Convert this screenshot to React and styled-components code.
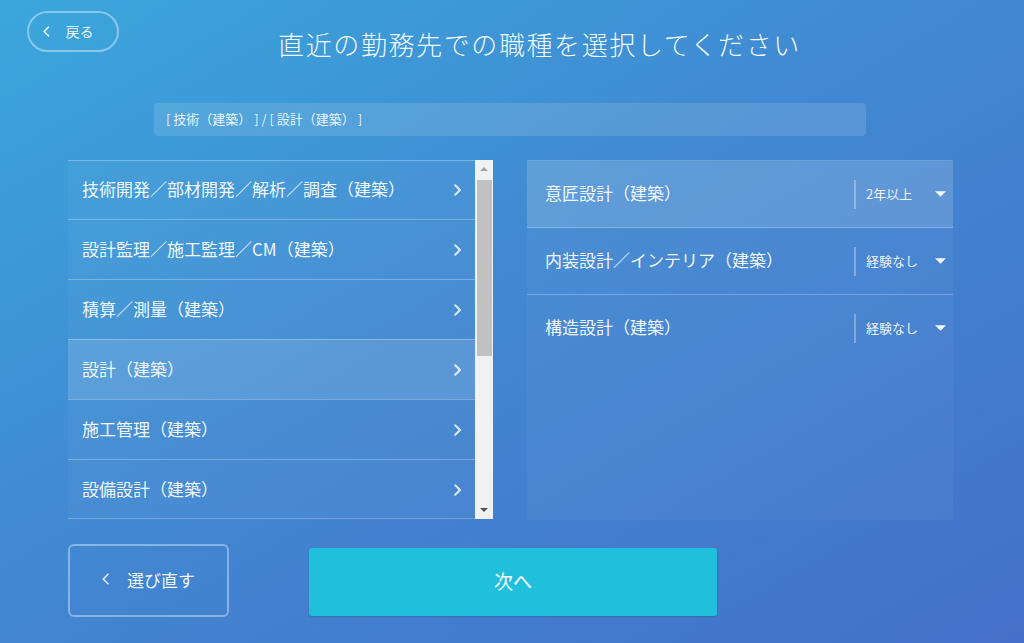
import styled, { createGlobalStyle } from 'styled-components'

const GlobalStyle = createGlobalStyle`
  html, body {
    margin: 0;
    padding: 0;
  }
  body {
    font-family: "Noto Sans CJK JP", "Noto Sans", sans-serif;
    color: #fff;
  }
`

const Page = styled.div`
  width: 1024px;
  height: 643px;
  overflow: hidden;
  background: linear-gradient(150deg, #3aa7dc 0%, #4189d2 45%, #4570c9 100%);
  display: flex;
  flex-direction: column;
`

const Header = styled.header`
  height: 86px;
  display: flex;
  align-items: center;
  padding: 0 64px 0 27px;
`

const BackButton = styled.button`
  align-self: flex-start;
  margin-top: 11px;
  width: 92px;
  height: 41px;
  box-sizing: border-box;
  border: 2px solid rgba(255, 255, 255, 0.4);
  border-radius: 21px;
  background: transparent;
  color: rgba(255, 255, 255, 0.92);
  font-family: inherit;
  font-size: 14px;
  display: flex;
  align-items: center;
  gap: 16px;
  padding: 0 0 1px 14px;
`

const Title = styled.h1`
  flex: 1;
  margin: 0;
  text-align: center;
  font-family: "Noto Sans CJK JP Light", "Noto Sans CJK JP", sans-serif;
  font-size: 26px;
  font-weight: 300;
  letter-spacing: 1.6px;
  color: rgba(255, 255, 255, 0.96);
`

const Breadcrumb = styled.div`
  margin: 17px 0 0 154px;
  width: 712px;
  height: 33px;
  box-sizing: border-box;
  border-radius: 4px;
  background: rgba(255, 255, 255, 0.12);
  display: flex;
  align-items: center;
  padding: 0 0 2px 12px;
  font-size: 13px;
  color: rgba(255, 255, 255, 0.9);
`

const Content = styled.div`
  margin-top: 24px;
  padding-left: 68px;
  display: flex;
  gap: 34px;
`

const LeftColumn = styled.div`
  display: flex;
  height: 359px;
`

const List = styled.div`
  width: 407px;
  overflow: hidden;
  border-bottom: 1px solid rgba(255, 255, 255, 0.28);
`

const ListRow = styled.div`
  height: 59px;
  box-sizing: border-box;
  border-top: 1px solid rgba(255, 255, 255, 0.28);
  background: ${p => (p.$active ? 'rgba(255, 255, 255, 0.14)' : 'rgba(255, 255, 255, 0.04)')};
  display: flex;
  align-items: center;
  justify-content: space-between;
  padding: 0 14px 3px 14px;
  font-size: 17px;
  color: rgba(255, 255, 255, 0.95);
  & + & {
    height: 60px;
  }
`

const ListChevron = styled.span`
  display: flex;
  padding-top: 3px;
`

const Scrollbar = styled.div`
  width: 18px;
  background: #f1f1f1;
  display: flex;
  flex-direction: column;
  align-items: center;
`

const ScrollArrow = styled.div`
  height: 18px;
  width: 100%;
  display: flex;
  align-items: center;
  justify-content: center;
`

const ScrollThumb = styled.div`
  margin-top: 2px;
  width: 15px;
  height: 176px;
  background: #c1c1c1;
`

const ScrollTrack = styled.div`
  flex: 1;
`

const RightPanel = styled.div`
  width: 426px;
  height: 360px;
  background: rgba(255, 255, 255, 0.04);
  border-top: 1px solid rgba(255, 255, 255, 0.2);
  box-sizing: border-box;
`

const PanelRow = styled.div`
  height: 66px;
  border-bottom: ${p => (p.$last ? 'none' : '1px solid rgba(255, 255, 255, 0.25)')};
  background: ${p => (p.$active ? 'rgba(255, 255, 255, 0.13)' : 'transparent')};
  display: flex;
  align-items: center;
`

const PanelLabel = styled.div`
  flex: 1;
  padding: 0 0 3px 18px;
  font-size: 17px;
  color: rgba(255, 255, 255, 0.95);
`

const Select = styled.div`
  width: 99px;
  height: 29px;
  box-sizing: border-box;
  border-left: 2px solid rgba(255, 255, 255, 0.3);
  display: flex;
  align-items: center;
  justify-content: space-between;
  padding: 0 7px 1px 10px;
  font-size: 13px;
  color: rgba(255, 255, 255, 0.92);
`

const Footer = styled.div`
  margin-top: 24px;
  padding-left: 68px;
  display: flex;
  align-items: flex-start;
  gap: 80px;
`

const RedoButton = styled.button`
  width: 161px;
  height: 73px;
  box-sizing: border-box;
  border: 2px solid rgba(255, 255, 255, 0.38);
  border-radius: 6px;
  background: transparent;
  color: rgba(255, 255, 255, 0.95);
  font-family: inherit;
  font-size: 17px;
  display: flex;
  align-items: center;
  justify-content: center;
  gap: 18px;
  padding: 0 0 3px 0;
`

const NextButton = styled.button`
  margin-top: 4px;
  width: 408px;
  height: 68px;
  border: none;
  border-radius: 3px;
  background: #20c0dc;
  box-shadow: 0 1px 2px rgba(0, 40, 90, 0.2);
  color: #fff;
  font-family: inherit;
  font-size: 19px;
  padding-bottom: 5px;
`

const Chevron = ({ dir = 'right', size = 12, color = 'rgba(255,255,255,0.8)', width = 2 }) => (
  <svg width={size * 0.6} height={size} viewBox="0 0 6 10" fill="none">
    <polyline
      points={dir === 'right' ? '1,1 5,5 1,9' : '5,1 1,5 5,9'}
      stroke={color}
      strokeWidth={width}
      strokeLinecap="round"
      strokeLinejoin="round"
      vectorEffect="non-scaling-stroke"
    />
  </svg>
)

const Triangle = ({ up, color, w = 12, h = 6 }) => (
  <svg width={w} height={h} viewBox="0 0 12 6">
    <polygon points={up ? '0,6 12,6 6,0' : '0,0 12,0 6,6'} fill={color} />
  </svg>
)

const jobs = [
  '技術開発／部材開発／解析／調査（建築）',
  '設計監理／施工監理／CM（建築）',
  '積算／測量（建築）',
  '設計（建築）',
  '施工管理（建築）',
  '設備設計（建築）',
]

const details = [
  { name: '意匠設計（建築）', value: '2年以上' },
  { name: '内装設計／インテリア（建築）', value: '経験なし' },
  { name: '構造設計（建築）', value: '経験なし' },
]

export default function App() {
  return (
    <Page>
      <GlobalStyle />
      <Header>
        <BackButton>
          <Chevron dir="left" size={11} color="rgba(255,255,255,0.85)" width={1.6} />
          戻る
        </BackButton>
        <Title>直近の勤務先での職種を選択してください</Title>
      </Header>

      <Breadcrumb>[ 技術（建築） ] / [ 設計（建築） ]</Breadcrumb>

      <Content>
        <LeftColumn>
          <List>
            {jobs.map(job => (
              <ListRow key={job} $active={job === '設計（建築）'}>
                <span>{job}</span>
                <ListChevron>
                  <Chevron />
                </ListChevron>
              </ListRow>
            ))}
          </List>
          <Scrollbar>
            <ScrollArrow>
              <Triangle up color="#a3a3a3" w={8} h={4} />
            </ScrollArrow>
            <ScrollThumb />
            <ScrollTrack />
            <ScrollArrow>
              <Triangle color="#505050" w={8} h={4} />
            </ScrollArrow>
          </Scrollbar>
        </LeftColumn>

        <RightPanel>
          {details.map((d, i) => (
            <PanelRow key={d.name} $active={i === 0} $last={i === details.length - 1}>
              <PanelLabel>{d.name}</PanelLabel>
              <Select>
                <span>{d.value}</span>
                <Triangle color="rgba(255,255,255,0.95)" w={11} h={6} />
              </Select>
            </PanelRow>
          ))}
        </RightPanel>
      </Content>

      <Footer>
        <RedoButton>
          <Chevron dir="left" size={12} color="rgba(255,255,255,0.85)" width={1.6} />
          選び直す
        </RedoButton>
        <NextButton>次へ</NextButton>
      </Footer>
    </Page>
  )
}
